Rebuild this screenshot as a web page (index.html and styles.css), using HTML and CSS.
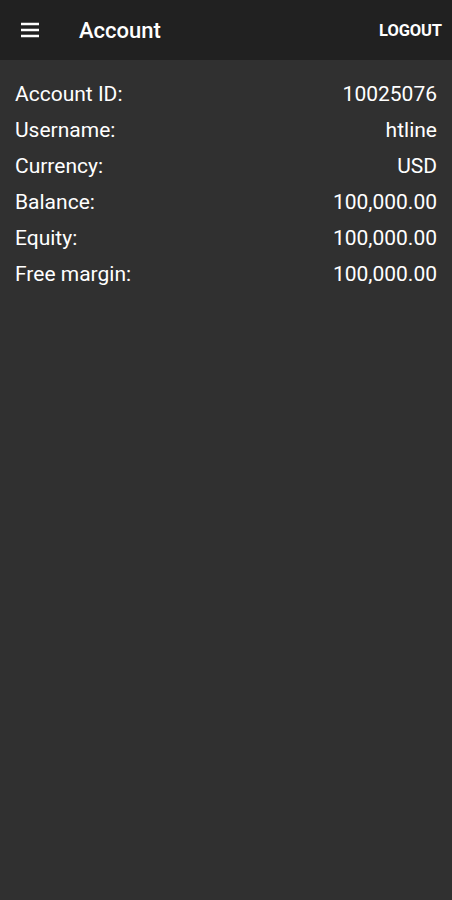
FILE: index.html
```html
<!DOCTYPE html>
<html lang="en">
<head>
    <meta charset="UTF-8">
    <meta name="viewport" content="width=device-width, initial-scale=1.0">
    <title>Account</title>
    <link rel="stylesheet" href="styles.css">
</head>
<body>
    <header class="toolbar">
        <button class="menu-btn" aria-label="Menu">
            <svg width="24" height="24" viewBox="0 0 24 24">
                <path d="M3 6h18M3 12h18M3 18h18" stroke="#fff" stroke-width="2.4" fill="none"/>
            </svg>
        </button>
        <h1 class="title">Account</h1>
        <button class="logout">LOGOUT</button>
    </header>

    <main class="info">
        <div class="row"><span>Account ID:</span><span>10025076</span></div>
        <div class="row"><span>Username:</span><span>htline</span></div>
        <div class="row"><span>Currency:</span><span>USD</span></div>
        <div class="row"><span>Balance:</span><span>100,000.00</span></div>
        <div class="row"><span>Equity:</span><span>100,000.00</span></div>
        <div class="row"><span>Free margin:</span><span>100,000.00</span></div>
    </main>
</body>
</html>
```

FILE: styles.css
```css
body {
    margin: 0;
    font-family: Roboto, "Liberation Sans", sans-serif;
    background: #303030;
    color: #fff;
    min-height: 900px;
}
.toolbar {
    display: flex;
    align-items: center;
    height: 60px;
    background: #212121;
    padding: 0 10px 0 19px;
}
.menu-btn {
    background: none;
    border: none;
    padding: 0;
    width: 24px;
    height: 24px;
    margin-left: -1px;
}
.menu-btn svg {
    display: block;
}
.title {
    margin: 0 0 0 37px;
    font-size: 22px;
    font-weight: 500;
    flex: 1;
}
.logout {
    background: none;
    border: none;
    color: #fff;
    font-family: inherit;
    font-size: 16.5px;
    font-weight: 700;
    padding: 0;
    letter-spacing: -0.1px;
}
.info {
    padding: 16px 15px 0;
}
.row {
    display: flex;
    justify-content: space-between;
    font-size: 21px;
    height: 36px;
    line-height: 36px;
}
```
